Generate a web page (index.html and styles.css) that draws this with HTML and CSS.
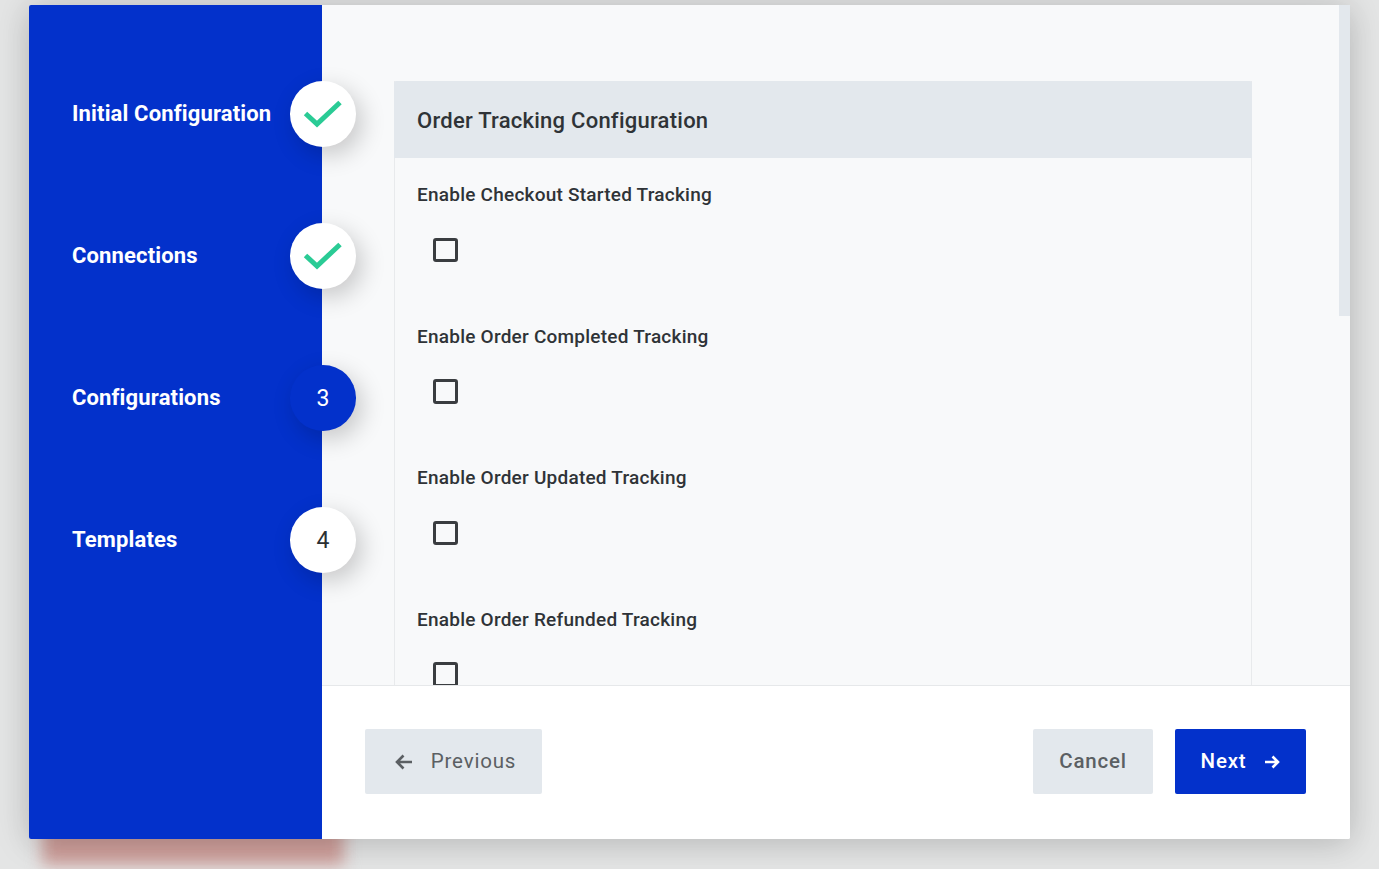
FILE: index.html
```html
<!DOCTYPE html>
<html lang="en">
<head>
<meta charset="utf-8">
<title>Order Tracking Configuration</title>
<link rel="stylesheet" href="styles.css">
</head>
<body>
<div class="glow"></div>
<div class="modal">
  <aside class="sidebar">
    <div class="step"><span class="step-label">Initial Configuration</span><span class="badge"><svg class="check" viewBox="0 0 40 30" width="40" height="30"><path d="M2.5 14.5 L14 25 L37 3.5" fill="none" stroke="#2acb95" stroke-width="5"/></svg></span></div>
    <div class="step"><span class="step-label">Connections</span><span class="badge"><svg class="check" viewBox="0 0 40 30" width="40" height="30"><path d="M2.5 14.5 L14 25 L37 3.5" fill="none" stroke="#2acb95" stroke-width="5"/></svg></span></div>
    <div class="step"><span class="step-label">Configurations</span><span class="badge badge-active">3</span></div>
    <div class="step"><span class="step-label">Templates</span><span class="badge">4</span></div>
  </aside>
  <main class="main">
    <div class="content">
      <section class="panel">
        <h2 class="panel-title">Order Tracking Configuration</h2>
        <div class="panel-body">
          <div class="field"><label class="field-label">Enable Checkout Started Tracking</label><span class="checkbox"></span></div>
          <div class="field"><label class="field-label">Enable Order Completed Tracking</label><span class="checkbox"></span></div>
          <div class="field"><label class="field-label">Enable Order Updated Tracking</label><span class="checkbox"></span></div>
          <div class="field"><label class="field-label">Enable Order Refunded Tracking</label><span class="checkbox"></span></div>
        </div>
      </section>
      <div class="thumb"></div>
    </div>
    <footer class="footer">
      <button class="btn btn-gray btn-prev"><svg viewBox="0 0 18 16" width="18" height="16"><path d="M17 8 H2 M8.5 1.5 L2 8 L8.5 14.5" fill="none" stroke="currentColor" stroke-width="2.6"/></svg><span>Previous</span></button>
      <div class="footer-right">
        <button class="btn btn-gray btn-cancel">Cancel</button>
        <button class="btn btn-blue btn-next"><span>Next</span><svg viewBox="0 0 16 14" width="16" height="14"><path d="M1 7 H14 M8.5 1.5 L14 7 L8.5 12.5" fill="none" stroke="currentColor" stroke-width="2.6"/></svg></button>
      </div>
    </footer>
  </main>
</div>
</body>
</html>
```
FILE: styles.css
```css
* { box-sizing: border-box; }
html, body { height: 100%; }
body {
  margin: 0;
  height: 869px;
  overflow: hidden;
  background: #e4e5e5;
  font-family: Roboto, "Liberation Sans", sans-serif;
  padding: 5px 29px 30px 29px;
  position: relative;
}
.glow {
  position: absolute;
  left: 42px;
  top: 815px;
  width: 302px;
  height: 50px;
  background: #cf9f9b;
  filter: blur(8px);
}
.modal {
  position: relative;
  width: 1321px;
  height: 834px;
  display: flex;
  background: #fff;
  border-radius: 2px;
  box-shadow: 0 0 36px rgba(0, 0, 0, .17), 0 10px 30px rgba(0, 0, 0, .06);
}
.sidebar {
  position: relative;
  z-index: 2;
  width: 293px;
  flex: none;
  background: #0331cb;
  border-radius: 2px 0 0 2px;
  padding: 76px 0 0 43px;
  display: flex;
  flex-direction: column;
  gap: 76px;
}
.step {
  height: 66px;
  margin-right: -34px;
  display: flex;
  align-items: center;
  justify-content: space-between;
}
.step-label {
  color: #fff;
  font-size: 22px;
  font-weight: 700;
  letter-spacing: .15px;
  margin-top: -2px;
}
.badge {
  width: 66px;
  height: 65.5px;
  border-radius: 50%;
  background: #fff;
  color: #2b2f33;
  font-size: 23px;
  display: flex;
  align-items: center;
  justify-content: center;
  box-shadow: 6px 8px 24px rgba(0, 0, 0, .2);
}
.badge-active { background: #0331cb; color: #fff; }
.main {
  flex: 1;
  min-width: 0;
  display: flex;
  flex-direction: column;
}
.content {
  position: relative;
  height: 681px;
  flex: none;
  overflow: hidden;
  background: #f8f9fa;
  padding: 76px 98px 0 72px;
  border-bottom: 1px solid #e6e8ea;
}
.thumb {
  position: absolute;
  right: 0;
  top: 0;
  width: 11px;
  height: 311px;
  background: #e3e8ed;
}
.panel {
  border-left: 1px solid #e8eaec;
  border-right: 1px solid #e8eaec;
}
.panel-title {
  margin: 0 -1px;
  height: 77px;
  padding: 1px 23px 0;
  background: #e3e8ed;
  border-radius: 2px 2px 0 0;
  color: #2f3337;
  font-size: 22px;
  font-weight: 500;
  letter-spacing: .25px;
  line-height: 77px;
}
.panel-body { padding: 23px 22px 0; }
.field {
  height: 141.6px;
}
.field-label {
  display: block;
  color: #2f3337;
  font-size: 19px;
  font-weight: 500;
  letter-spacing: .23px;
  line-height: 28px;
}
.checkbox {
  display: block;
  width: 24.5px;
  height: 24.5px;
  margin: 28.5px 0 0 16px;
  border: 3px solid #3a3d40;
  border-radius: 3px;
}
.footer {
  flex: 1;
  background: #fff;
  display: flex;
  align-items: center;
  justify-content: space-between;
  padding: 0 44px 2px 43px;
  border-radius: 0 0 2px 0;
}
.footer-right { display: flex; gap: 22px; }
.btn {
  height: 65px;
  border: 0;
  border-radius: 2px;
  display: flex;
  align-items: center;
  justify-content: center;
  font-family: inherit;
  font-size: 20.5px;
  letter-spacing: .8px;
  font-weight: 400;
  padding: 0 0 2px;
}
.btn svg { margin-top: 2px; }
.btn-gray { background: #e3e8ed; color: #5b5f63; }
.btn-blue { background: #0331cb; color: #fff; font-weight: 500; }
.btn-prev { width: 177px; gap: 18px; padding-left: 4px; }
.btn-cancel { width: 120px; font-weight: 500; }
.btn-next { width: 131px; gap: 18px; }
```
